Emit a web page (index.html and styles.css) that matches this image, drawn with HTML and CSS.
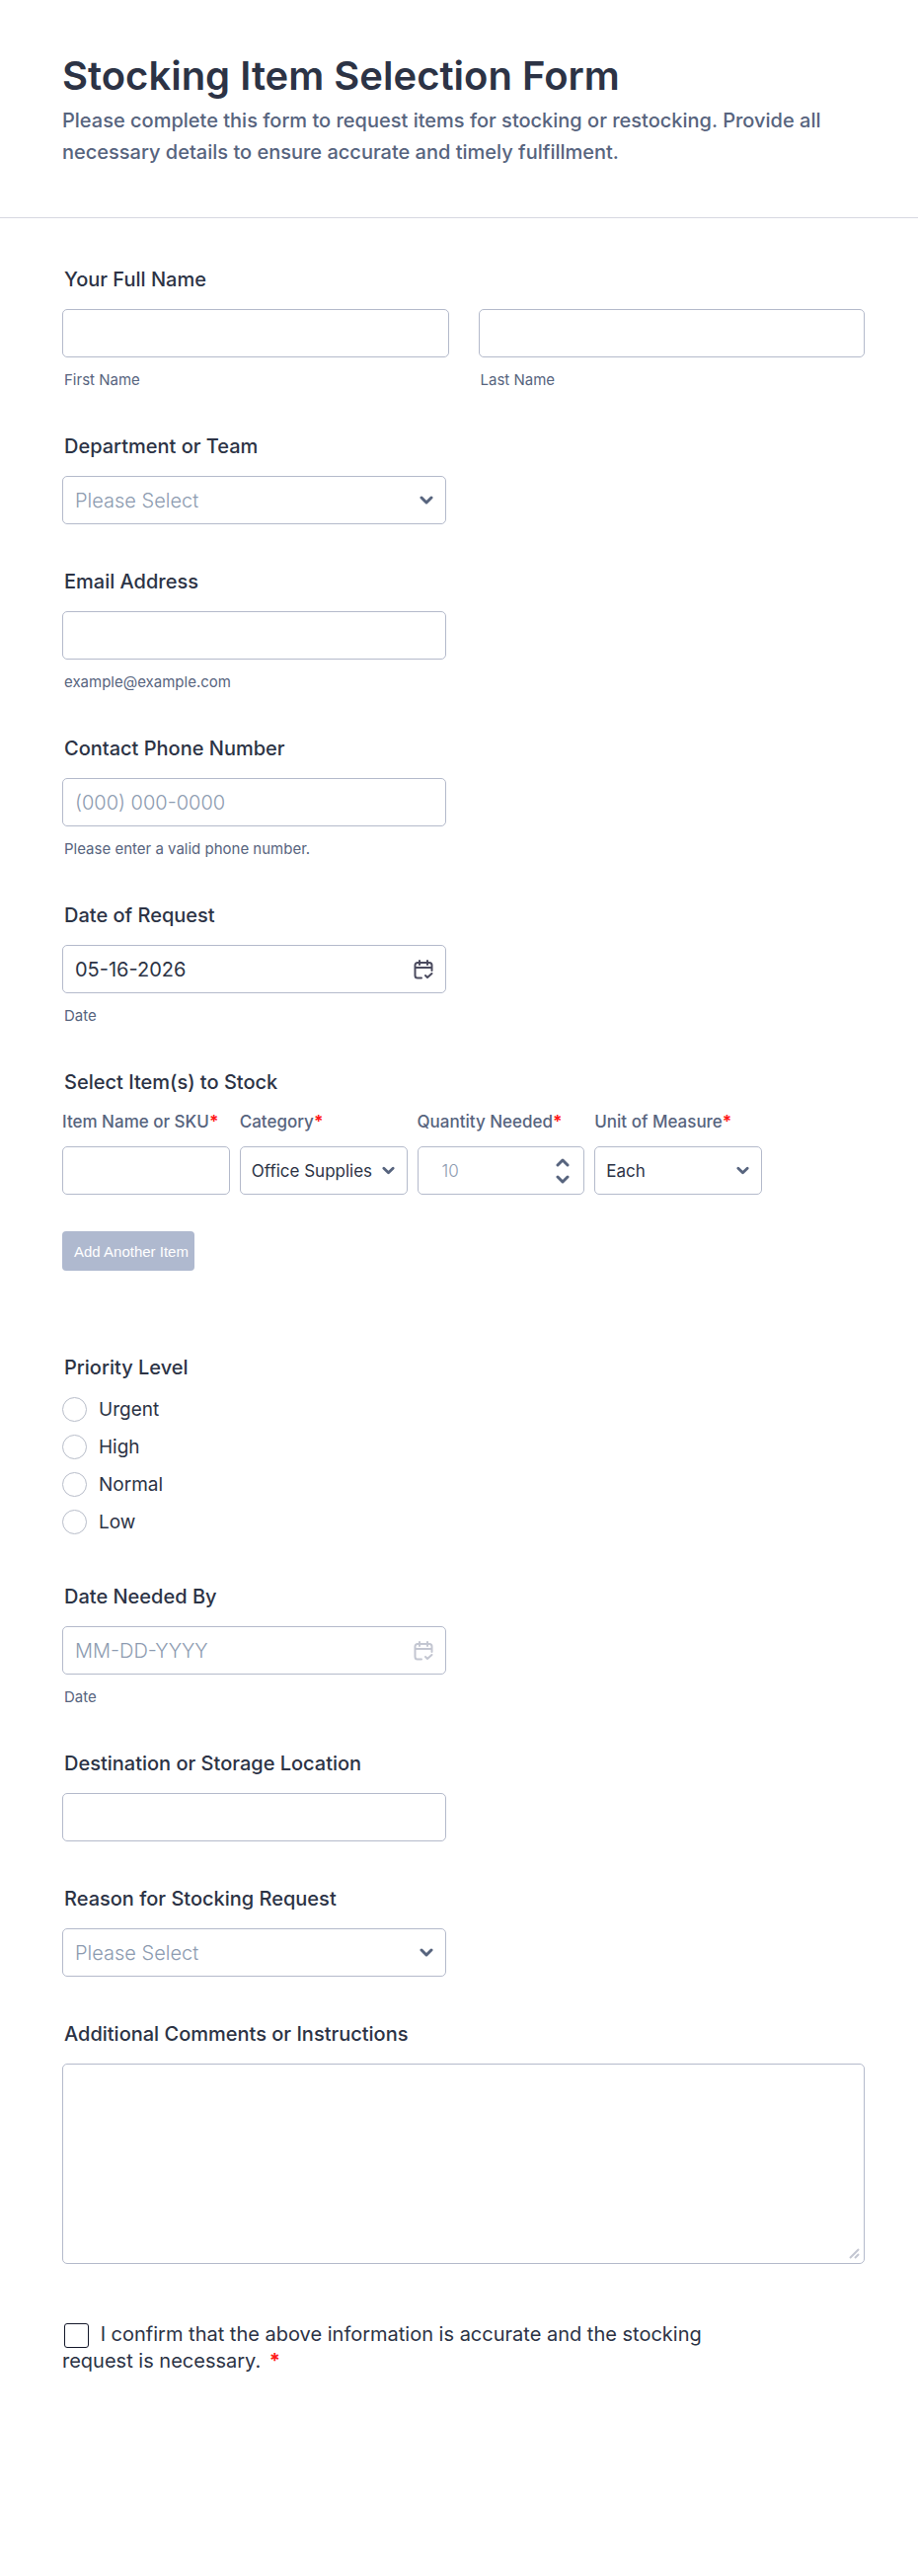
FILE: index.html
```
<!DOCTYPE html>
<html lang="en">

<head>
    <meta charset="UTF-8">
    <meta name="viewport" content="width=device-width, initial-scale=1.0">
    <title>Stocking Item Selection Form</title>
    <link rel="stylesheet" href="styles.css">
</head>

<body>
    <form class="form">
        <header class="form-header">
            <h1>Stocking Item Selection Form</h1>
            <p>Please complete this form to request items for stocking or restocking. Provide all necessary details to ensure accurate and timely fulfillment.</p>
        </header>

        <div class="form-body">
            <fieldset class="field">
                <legend class="label">Your Full Name</legend>
                <div class="name-row">
                    <div>
                        <input class="input" type="text" id="firstName">
                        <label class="sublabel" for="firstName">First Name</label>
                    </div>
                    <div>
                        <input class="input" type="text" id="lastName">
                        <label class="sublabel" for="lastName">Last Name</label>
                    </div>
                </div>
            </fieldset>

            <div class="field">
                <label class="label" for="department">Department or Team</label>
                <div class="control">
                    <select class="input placeholder" id="department">
                        <option>Please Select</option>
                    </select>
                    <svg class="chevron" viewBox="0 0 14 10"><path d="M2 2l5 5 5-5" /></svg>
                </div>
            </div>

            <div class="field">
                <label class="label" for="email">Email Address</label>
                <div class="control">
                    <input class="input" type="email" id="email">
                </div>
                <label class="sublabel" for="email">example@example.com</label>
            </div>

            <div class="field">
                <label class="label" for="phone">Contact Phone Number</label>
                <div class="control">
                    <input class="input" type="tel" id="phone" placeholder="(000) 000-0000">
                </div>
                <label class="sublabel" for="phone">Please enter a valid phone number.</label>
            </div>

            <div class="field">
                <label class="label" for="requestDate">Date of Request</label>
                <div class="control">
                    <input class="input" type="text" id="requestDate" value="05-16-2026">
                    <svg class="calendar" viewBox="0 0 20 20"><path d="M8 18.500H4a2.500 2.500 0 0 1-2.500-2.500V5.500A2.500 2.500 0 0 1 4 3h12a2.500 2.500 0 0 1 2.500 2.500V11M1.500 8h17M6 1v4M14 1v4M12 16l2 2 4.500-4" /></svg>
                </div>
                <label class="sublabel" for="requestDate">Date</label>
            </div>

            <fieldset class="field items">
                <legend class="label">Select Item(s) to Stock</legend>
                <div class="item-row">
                    <div>
                        <label class="item-label" for="sku">Item Name or SKU<span class="required">*</span></label>
                        <input class="input small" type="text" id="sku">
                    </div>
                    <div>
                        <label class="item-label" for="category">Category<span class="required">*</span></label>
                        <div class="control">
                            <select class="input small" id="category">
                                <option>Office Supplies</option>
                            </select>
                            <svg class="chevron" viewBox="0 0 14 10"><path d="M2 2l5 5 5-5" /></svg>
                        </div>
                    </div>
                    <div>
                        <label class="item-label" for="quantity">Quantity Needed<span class="required">*</span></label>
                        <div class="control">
                            <input class="input small quantity" type="number" id="quantity" placeholder="10">
                            <svg class="stepper" viewBox="0 0 14 26"><path d="M2 7l5-5 5 5M2 19l5 5 5-5" /></svg>
                        </div>
                    </div>
                    <div>
                        <label class="item-label" for="unit">Unit of Measure<span class="required">*</span></label>
                        <div class="control">
                            <select class="input small" id="unit">
                                <option>Each</option>
                            </select>
                            <svg class="chevron" viewBox="0 0 14 10"><path d="M2 2l5 5 5-5" /></svg>
                        </div>
                    </div>
                </div>
                <button class="add-button" type="button">Add Another Item</button>
            </fieldset>

            <fieldset class="field priority">
                <legend class="label">Priority Level</legend>
                <div class="radio-list">
                    <label class="radio"><input type="radio" name="priority" value="Urgent">Urgent</label>
                    <label class="radio"><input type="radio" name="priority" value="High">High</label>
                    <label class="radio"><input type="radio" name="priority" value="Normal">Normal</label>
                    <label class="radio"><input type="radio" name="priority" value="Low">Low</label>
                </div>
            </fieldset>

            <div class="field">
                <label class="label" for="neededDate">Date Needed By</label>
                <div class="control">
                    <input class="input" type="text" id="neededDate" placeholder="MM-DD-YYYY">
                    <svg class="calendar muted" viewBox="0 0 20 20"><path d="M8 18.500H4a2.500 2.500 0 0 1-2.500-2.500V5.500A2.500 2.500 0 0 1 4 3h12a2.500 2.500 0 0 1 2.500 2.500V11M1.500 8h17M6 1v4M14 1v4M12 16l2 2 4.500-4" /></svg>
                </div>
                <label class="sublabel" for="neededDate">Date</label>
            </div>

            <div class="field">
                <label class="label" for="destination">Destination or Storage Location</label>
                <div class="control">
                    <input class="input" type="text" id="destination">
                </div>
            </div>

            <div class="field">
                <label class="label" for="reason">Reason for Stocking Request</label>
                <div class="control">
                    <select class="input placeholder" id="reason">
                        <option>Please Select</option>
                    </select>
                    <svg class="chevron" viewBox="0 0 14 10"><path d="M2 2l5 5 5-5" /></svg>
                </div>
            </div>

            <div class="field">
                <label class="label" for="comments">Additional Comments or Instructions</label>
                <textarea class="input comments" id="comments"></textarea>
            </div>

            <div class="confirm">
                <input type="checkbox" id="confirm">
                <label for="confirm">I confirm that the above information is accurate and the stocking request is necessary. <span class="required">*</span></label>
            </div>
        </div>
    </form>
</body>

</html>
```
FILE: styles.css
```
* {
    box-sizing: border-box;
}

body {
    margin: 0;
    background: #fff;
    color: #2c3345;
    font-family: Inter, sans-serif;
    font-size: 20px;
}

.form-header {
    padding: 52px 54px 50px 63px;
    border-bottom: 1px solid #d7d8e1;
}

.form-header h1 {
    margin: 0;
    font-size: 40px;
    line-height: 50px;
    font-weight: 600;
}

.form-header p {
    margin: 4px 0 0;
    color: #57647e;
    font-weight: 500;
    line-height: 32px;
}

.form-body {
    padding: 50px 54px 60px 63px;
}

.field {
    margin: 0 0 46px;
    padding: 0;
    border: 0;
    min-width: 0;
}

.label {
    display: block;
    padding: 0 2px;
    margin-bottom: 18px;
    line-height: 24px;
    font-weight: 500;
}

.sublabel {
    display: block;
    margin: 14px 2px 0;
    font-size: 15px;
    line-height: 18px;
    color: #57647e;
}

.control {
    position: relative;
    max-width: 389px;
}

.input {
    display: block;
    width: 100%;
    height: 49px;
    padding: 0 12px;
    border: 1px solid #b4bacb;
    border-radius: 5px;
    background: #fff;
    color: #2c3345;
    font-family: inherit;
    font-size: 20px;
    appearance: none;
}

.input::placeholder {
    color: #8d9bb0;
    font-weight: 300;
    opacity: 1;
}

.placeholder {
    color: #8d9bb0;
    font-weight: 300;
}

.name-row {
    display: grid;
    grid-template-columns: 1fr 1fr;
    gap: 30px;
}

/* icons on top of the inputs */
.chevron,
.stepper,
.calendar {
    position: absolute;
    right: 13px;
    top: 50%;
    transform: translateY(-50%);
    fill: none;
    stroke: #57647e;
    stroke-width: 2;
    stroke-linecap: round;
    stroke-linejoin: round;
    pointer-events: none;
}

.chevron {
    width: 14px;
    height: 10px;
    stroke-width: 3;
}

.small + .chevron {
    width: 13px;
}

.stepper {
    right: 15px;
    width: 14px;
    height: 26px;
    stroke-width: 3;
}

.calendar {
    width: 20px;
    height: 20px;
    stroke: #4a4a5e;
}

.calendar.muted {
    stroke: #c3c6d1;
}

/* item table */
.items {
    margin-bottom: 86px;
}

.items .label {
    margin-bottom: 16px;
}

.item-row {
    display: grid;
    grid-template-columns: repeat(4, 1fr);
    gap: 10px;
    max-width: 709px;
}

.item-label {
    display: block;
    margin-bottom: 13px;
    font-size: 17px;
    line-height: 24px;
    color: #57647e;
    font-weight: 500;
    white-space: nowrap;
}

.required {
    color: #ff1a1a;
    font-weight: 700;
}

.input.small {
    padding: 0 11px;
    font-size: 17px;
}

.input.quantity {
    padding-left: 24px;
}

.quantity::-webkit-inner-spin-button {
    appearance: none;
}

.add-button {
    margin-top: 37px;
    height: 40px;
    padding: 0 6px 0 12px;
    border: 0;
    border-radius: 4px;
    background: #afb9cf;
    color: #fff;
    font-family: "Liberation Sans", Arial, sans-serif;
    font-size: 15px;
}

/* radios */
.priority {
    margin-bottom: 51px;
}

.radio-list {
    display: grid;
    gap: 13px;
}

.radio {
    display: flex;
    align-items: center;
    gap: 12px;
    font-size: 19px;
    line-height: 25px;
}

.radio input {
    appearance: none;
    width: 25px;
    height: 25px;
    margin: 0;
    border: 1px solid #b8bdc9;
    border-radius: 50%;
    background: #fff;
}

.comments {
    height: 203px;
    padding: 12px;
    resize: vertical;
}

.comments::-webkit-resizer {
    background: url("data:image/svg+xml,%3Csvg xmlns='http://www.w3.org/2000/svg' width='15' height='15' fill='none' stroke='%23c3c6d1' stroke-width='2'%3E%3Cpath d='M1 10l9-9M6 10l4-4'/%3E%3C/svg%3E") no-repeat;
}

.confirm {
    max-width: 692px;
    margin-top: 58px;
    line-height: 27px;
}

.confirm input {
    appearance: none;
    width: 25px;
    height: 25px;
    margin: 0 6px 0 2px;
    border: 1px solid #14182a;
    border-radius: 3px;
    vertical-align: middle;
}

.confirm .required {
    margin-left: 3px;
}
```
